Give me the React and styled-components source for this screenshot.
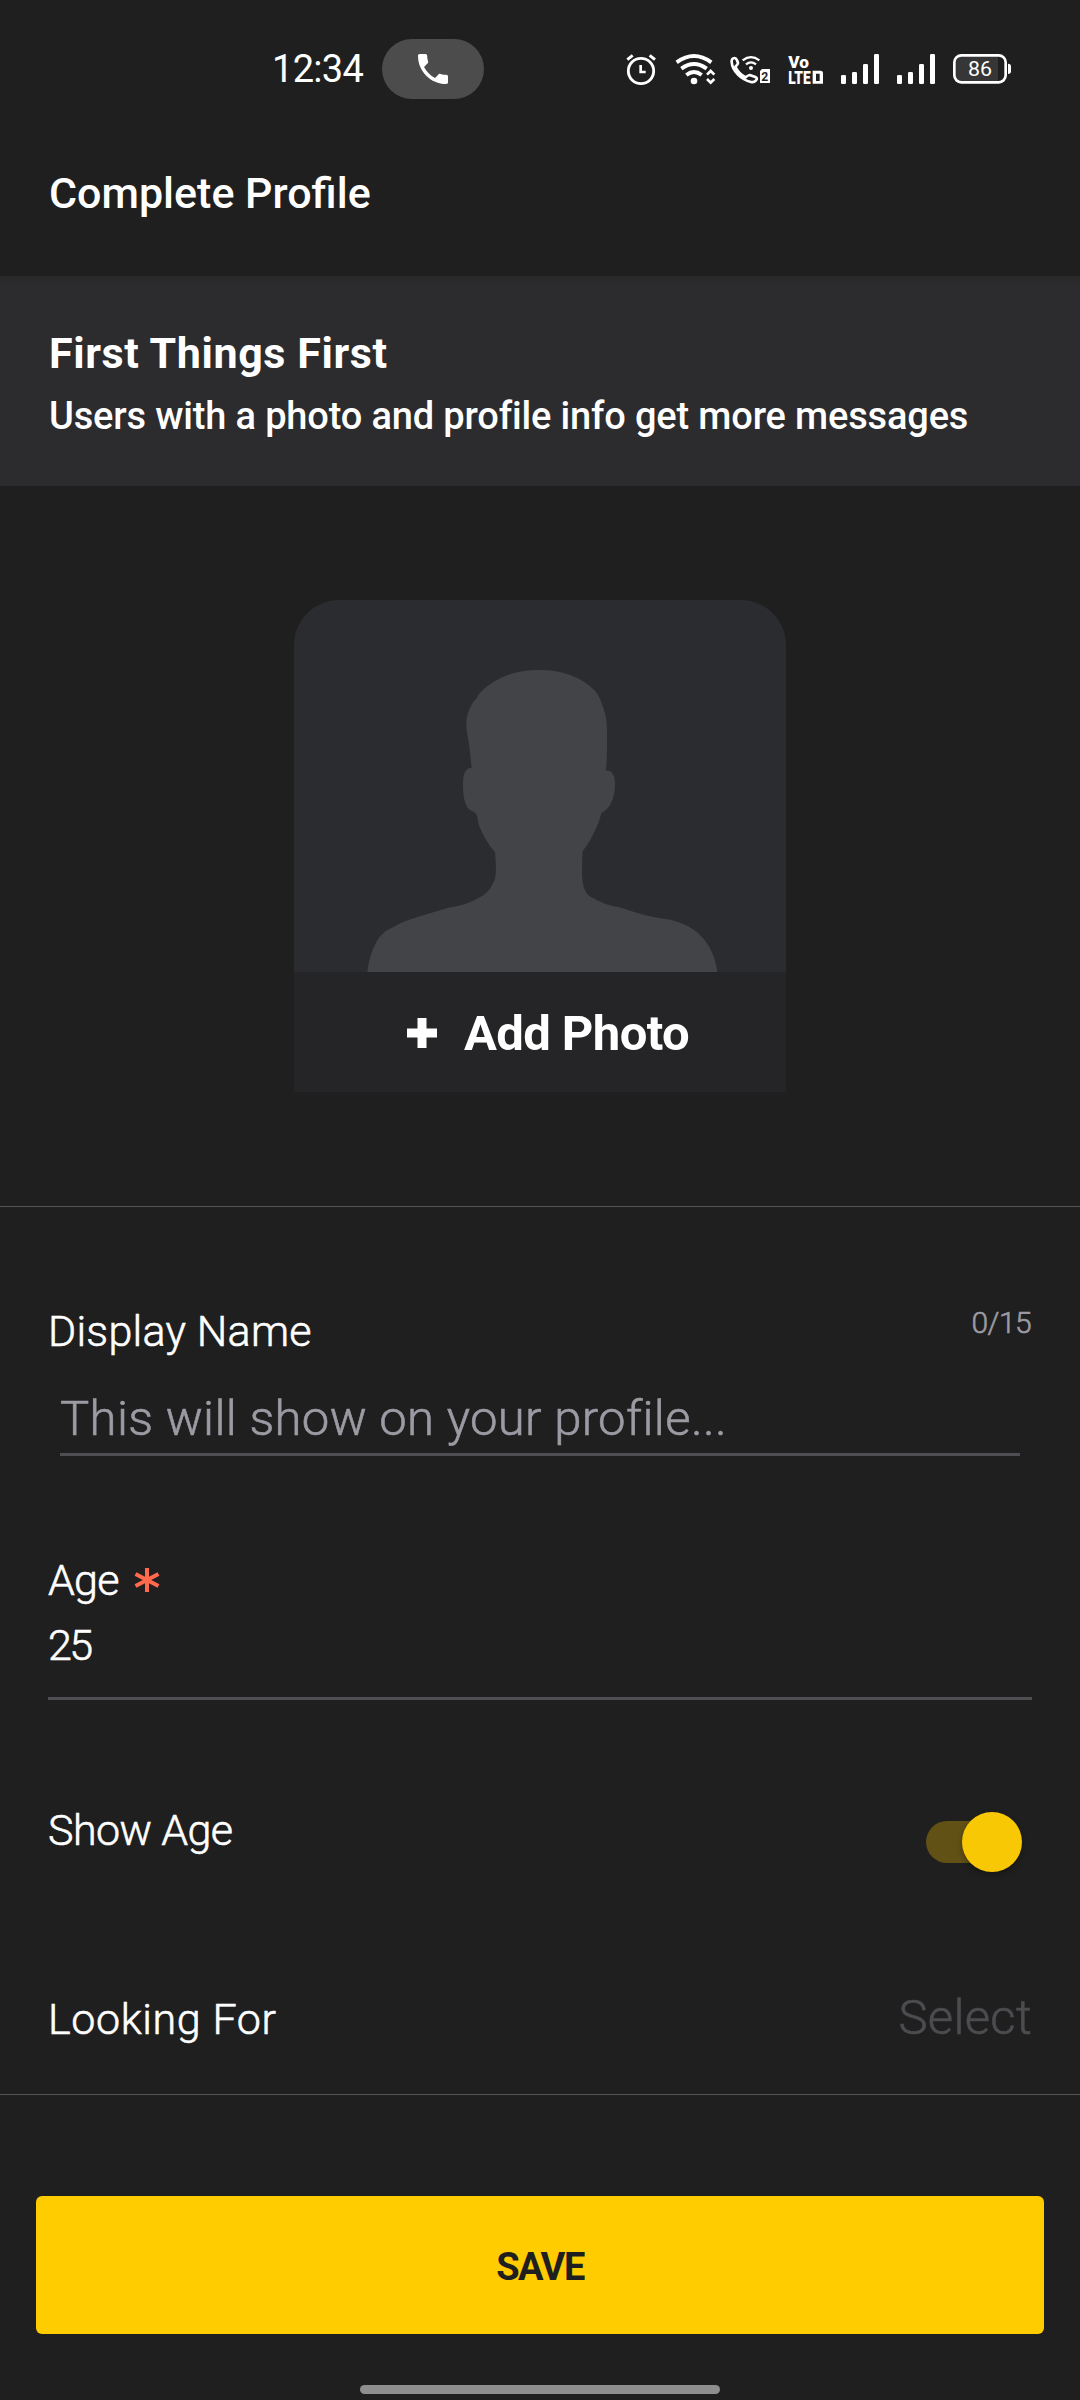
import React from 'react';
import styled, { createGlobalStyle } from 'styled-components';

const GlobalStyle = createGlobalStyle`
  * {
    box-sizing: border-box;
  }

  body {
    margin: 0;
    background: #1f1f1f;
    color: #fff;
    font-family: Roboto, "Liberation Sans", sans-serif;
  }
`;

const AlarmIcon = () => (
  <StatusIcon width="33" height="33" viewBox="78 69 99 99">
    <circle cx="123" cy="123" r="38" fill="none" stroke="#fff" strokeWidth="8.500" />
    <path d="M122 105v21h15" fill="none" stroke="#fff" strokeWidth="8" />
    <path d="M82 89l16-13M149 76l16 13" stroke="#fff" strokeWidth="9" />
  </StatusIcon>
);

const WifiIcon = () => (
  <StatusIcon width="38" height="33" viewBox="225 69 114 99">
    <g fill="none" stroke="#fff" strokeWidth="11.500">
      <path d="M230 97Q282 59 334 97" />
      <path d="M244 116Q282 88 320 116" />
      <path d="M259 135Q282 117 305 135" />
    </g>
    <circle cx="282" cy="153" r="10" fill="#fff" />
    <path d="M321 134l11-11 11 11M321 147l11 11 11-11" fill="none" stroke="#fff" strokeWidth="8" />
  </StatusIcon>
);

const WifiCallIcon = () => (
  <StatusIcon width="43" height="33" viewBox="387 69 129 99">
    <path
      d="M395 96Q394 84 404 84Q408 84 411 91L414 99Q414 103 406 110C412 124 424 135 437 142Q443 136 449 135L466 141Q474 145 468 151Q462 158 453 156C424 149 397 124 395 96z"
      fill="none"
      stroke="#fff"
      strokeWidth="8"
      strokeLinejoin="round"
    />
    <path d="M406 116Q418 134 435 145" stroke="#fff" strokeWidth="9" fill="none" />
    <path d="M428 91Q453 72 478 91M438 103Q453 91 468 103" fill="none" stroke="#fff" strokeWidth="7" />
    <circle cx="453" cy="114" r="6" fill="#fff" />
    <path d="M486 117h24v42h-30v-36z" fill="#fff" />
    <IconText x="484" y="153" fontSize="40" fontWeight="700" fill="#1f1f1f" textLength="21" lengthAdjust="spacingAndGlyphs">2</IconText>
  </StatusIcon>
);

const VolteIcon = () => (
  <StatusIcon width="36" height="33" viewBox="564 69 108 99">
    <IconText x="565" y="113" fontSize="52" fontWeight="900" fill="#fff" textLength="62" lengthAdjust="spacingAndGlyphs">Vo</IconText>
    <IconText x="565" y="161" fontSize="54" fontWeight="900" fill="#fff" textLength="67" lengthAdjust="spacingAndGlyphs">LTE</IconText>
    <path d="M638 122h24q7 0 7 8v31h-31zM648 131v22h11v-22z" fill="#fff" fillRule="evenodd" />
  </StatusIcon>
);

const SignalIcon = () => (
  <StatusIcon width="40" height="33" viewBox="60 69 120 99">
    <g fill="#fff">
      <rect x="63" y="135" width="15" height="27" rx="4" />
      <rect x="96" y="126" width="15" height="36" rx="4" />
      <rect x="129" y="102" width="15" height="60" rx="4" />
      <rect x="162" y="72" width="15" height="90" rx="4" />
    </g>
  </StatusIcon>
);

const BatteryIcon = () => (
  <StatusIcon width="60" height="33" viewBox="396 69 180 99">
    <path d="M420 78h114v78h-114q-16 0-16-16v-46q0-16 16-16z" fill="#363636" />
    <rect x="403" y="76" width="154" height="81" rx="21" fill="none" stroke="#fff" strokeWidth="8" />
    <path d="M564 101q9 0 9 8v15q0 8-9 8z" fill="#fff" />
    <IconText x="444" y="138" fontSize="63" fill="#fff" textLength="72" lengthAdjust="spacingAndGlyphs">86</IconText>
  </StatusIcon>
);

const PhoneIcon = () => (
  <svg width="40" height="40" viewBox="0 0 24 24" fill="#fff">
    <path d="M6.620 10.790c1.440 2.830 3.760 5.140 6.590 6.590l2.200-2.200c.27-.27.67-.36 1.020-.24 1.120.37 2.330.57 3.570.57.55 0 1 .45 1 1V20c0 .55-.45 1-1 1-9.390 0-17-7.610-17-17 0-.55.45-1 1-1h3.500c.55 0 1 .45 1 1 0 1.250.2 2.450.57 3.570.11.35.03.74-.25 1.020l-2.200 2.200z" />
  </svg>
);

const Silhouette = () => (
  <svg width="492" height="372" viewBox="42 59 1476 1101" preserveAspectRatio="none">
    <path
      d="M262 1160C267 1125 273 1104 281 1088C289 1072 296 1054 319 1038C336 1029 359 1015 385 1006C430 991 470 980 511 968C545 965 575 952 602 937C628 923 634 907 643 889C650 869 648 845 645 805C622 780 608 752 595 721C594 708 592 695 586 689C576 683 565 680 559 667C550 648 549 624 549 600C549 575 557 556 571 556H575C571 515 567 480 560 445C556 412 564 385 580 361C588 352 592 347 597 337C640 292 700 266 777 266C850 266 905 288 942 325C953 337 960 349 964 363C977 394 981 416 981 448V500C980 525 980 546 977 564C996 562 1005 577 1005 604C1004 645 991 678 964 689C959 717 932 776 908 802C906 833 905 873 908 893C911 915 920 935 941 942C961 953 985 965 1018 968C1054 979 1085 990 1120 997C1150 1003 1184 1004 1211 1019C1253 1037 1272 1060 1290 1090C1301 1109 1308 1135 1312 1160z"
      fill="#434447"
    />
  </svg>
);

const PlusIcon = () => (
  <svg width="30" height="30" viewBox="0 0 30 30">
    <path d="M15 0v30M0 15h30" stroke="#fff" strokeWidth="9" />
  </svg>
);

const AsteriskIcon = () => (
  <svg width="26" height="26" viewBox="0 0 26 26">
    <path d="M13 1v24M1.500 7l23 12M1.500 19l23-12" stroke="#ff6a4d" strokeWidth="4" />
  </svg>
);

export default function App() {
  return (
    <Screen>
      <GlobalStyle />
      <StatusBar>
        <Clock>12:34</Clock>
        <CallPill>
          <PhoneIcon />
        </CallPill>
        <StatusIcons>
          <AlarmIcon />
          <WifiIcon />
          <WifiCallIcon />
          <VolteIcon />
          <SignalIcon />
          <SignalIcon />
          <BatteryIcon />
        </StatusIcons>
      </StatusBar>
      <Header>
        <Title $weight={500}>Complete Profile</Title>
      </Header>
      <Banner>
        <Title $weight={700} $spacing={0.6}>First Things First</Title>
        <BannerText>Users with a photo and profile info get more messages</BannerText>
      </Banner>
      <PhotoSection>
        <PhotoCard>
          <Silhouette />
          <AddPhoto>
            <PlusIcon />
            <AddPhotoText>Add Photo</AddPhotoText>
          </AddPhoto>
        </PhotoCard>
      </PhotoSection>
      <Form>
        <NameRow>
          <Label $spacing={0.25}>Display Name</Label>
          <Counter>0/15</Counter>
        </NameRow>
        <NameInput>This will show on your profile...</NameInput>
        <AgeField>
          <AgeLabel>
            <Label $spacing={-0.8}>Age</Label>
            <AsteriskIcon />
          </AgeLabel>
          <AgeValue>25</AgeValue>
        </AgeField>
        <ShowAgeRow>
          <Label $spacing={-0.6}>Show Age</Label>
          <Toggle>
            <Thumb />
          </Toggle>
        </ShowAgeRow>
        <LookingRow>
          <Label $spacing={0.6}>Looking For</Label>
          <Select>Select</Select>
        </LookingRow>
      </Form>
      <Footer>
        <SaveButton>SAVE</SaveButton>
        <HomeBar />
      </Footer>
    </Screen>
  );
}

const Screen = styled.div`
  display: flex;
  flex-direction: column;
  width: 1080px;
  height: 2400px;
  background: #1f1f1f;
  overflow: hidden;
`;

/* Status bar */
const StatusBar = styled.div`
  display: flex;
  align-items: center;
  height: 138px;
  padding: 0 68px 0 272px;
`;

const Clock = styled.div`
  width: 110px;
  font-size: 38px;
  line-height: 44px;
  letter-spacing: -0.7px;
`;

const CallPill = styled.div`
  display: flex;
  align-items: center;
  justify-content: center;
  width: 102px;
  height: 60px;
  border-radius: 30px;
  background: #4c4c4c;
`;

const StatusIcons = styled.div`
  display: flex;
  align-items: center;
  gap: 16px;
  margin: 1px 0 0 auto;
`;

const StatusIcon = styled.svg`
  display: block;
  flex: none;
  overflow: visible;
`;

const IconText = styled.text`
  font-family: Roboto, sans-serif;
`;

const Title = styled.div`
  font-size: 43px;
  line-height: 50px;
  font-weight: ${({ $weight }) => $weight};
  letter-spacing: ${({ $spacing }) => $spacing || 0}px;
  white-space: nowrap;
`;

/* light face thickened a little, it sits between 300 and 400 */
const BookText = styled.div`
  font-weight: 300;
  -webkit-text-stroke: 0.6px currentColor;
  white-space: nowrap;
`;

const Label = styled(BookText)`
  font-size: 43px;
  line-height: 50px;
  letter-spacing: ${({ $spacing }) => $spacing || 0}px;
`;

const Header = styled.header`
  height: 138px;
  padding: 30px 49px 0;
`;

const Banner = styled.section`
  height: 210px;
  padding: 52px 49px 0;
  background: linear-gradient(#29292a, #2c2c2e 12px);
`;

const BannerText = styled.p`
  margin: 15px 0 0;
  font-size: 38px;
  line-height: 46px;
  font-weight: 500;
  letter-spacing: -0.16px;
  white-space: nowrap;
`;

/* Photo */
const PhotoSection = styled.section`
  display: flex;
  justify-content: center;
  height: 721px;
  padding-top: 114px;
  border-bottom: 1px solid #555557;
`;

const PhotoCard = styled.div`
  display: flex;
  flex-direction: column;
  width: 492px;
  height: 492px;
  border-radius: 45px 45px 0 0;
  background: #2b2c30;
  overflow: hidden;
`;

const AddPhoto = styled.div`
  display: flex;
  align-items: center;
  gap: 27px;
  flex: 1;
  padding: 2px 0 0 113px;
  background: #252527;
`;

const AddPhotoText = styled.span`
  padding-top: 2px;
  font-size: 49px;
  line-height: 58px;
  font-weight: 700;
  letter-spacing: -0.6px;
  white-space: nowrap;
`;

/* Form */
const Form = styled.section`
  display: flex;
  flex-direction: column;
  height: 888px;
  padding: 99px 48px 0;
  border-bottom: 1px solid #555557;
`;

const NameRow = styled.div`
  display: flex;
  justify-content: space-between;
  height: 84px;
`;

const Counter = styled(BookText)`
  font-size: 30px;
  line-height: 34px;
  letter-spacing: -0.6px;
  margin-right: 1px;
  color: #9c9ba4;
`;

const NameInput = styled(BookText)`
  height: 66px;
  margin: 0 12px;
  border-bottom: 3px solid #4f4f53;
  font-size: 49px;
  line-height: 58px;
  letter-spacing: 0.35px;
  color: #9c9ba4;
`;

const AgeField = styled.div`
  height: 145px;
  margin-top: 99px;
  border-bottom: 3px solid #4f4f53;
`;

const AgeLabel = styled.div`
  display: flex;
  align-items: center;
  gap: 15px;
`;

const AgeValue = styled(BookText)`
  margin-top: 15px;
  font-size: 43px;
  line-height: 50px;
  letter-spacing: -2.5px;
`;

const ShowAgeRow = styled.div`
  display: flex;
  justify-content: space-between;
  height: 183px;
  padding-top: 105px;
`;

const Toggle = styled.div`
  display: flex;
  align-items: center;
  justify-content: flex-end;
  width: 84px;
  height: 42px;
  margin: 16px 22px 0 0;
  border-radius: 21px;
  background: #625115;
`;

const Thumb = styled.div`
  flex: none;
  width: 60px;
  height: 60px;
  margin-right: -12px;
  border-radius: 50%;
  background: #f9c804;
  box-shadow: 0 3px 6px rgba(0, 0, 0, 0.3);
`;

const LookingRow = styled.div`
  display: flex;
  justify-content: space-between;
  align-items: baseline;
  padding-top: 106px;
`;

const Select = styled(BookText)`
  font-size: 49px;
  line-height: 58px;
  letter-spacing: 0.3px;
  color: #4c4c50;
`;

/* Footer */
const Footer = styled.footer`
  display: flex;
  flex-direction: column;
  align-items: center;
  padding: 101px 36px 0;
`;

const SaveButton = styled.button`
  width: 100%;
  height: 138px;
  padding: 3px 0 0;
  border: 0;
  border-radius: 6px;
  background: #fc0;
  color: #1f1f1f;
  font-family: inherit;
  font-size: 38px;
  font-weight: 700;
  letter-spacing: -1.5px;
`;

const HomeBar = styled.div`
  width: 360px;
  height: 9px;
  margin-top: 51px;
  border-radius: 5px;
  background: #8e8e8e;
`;
